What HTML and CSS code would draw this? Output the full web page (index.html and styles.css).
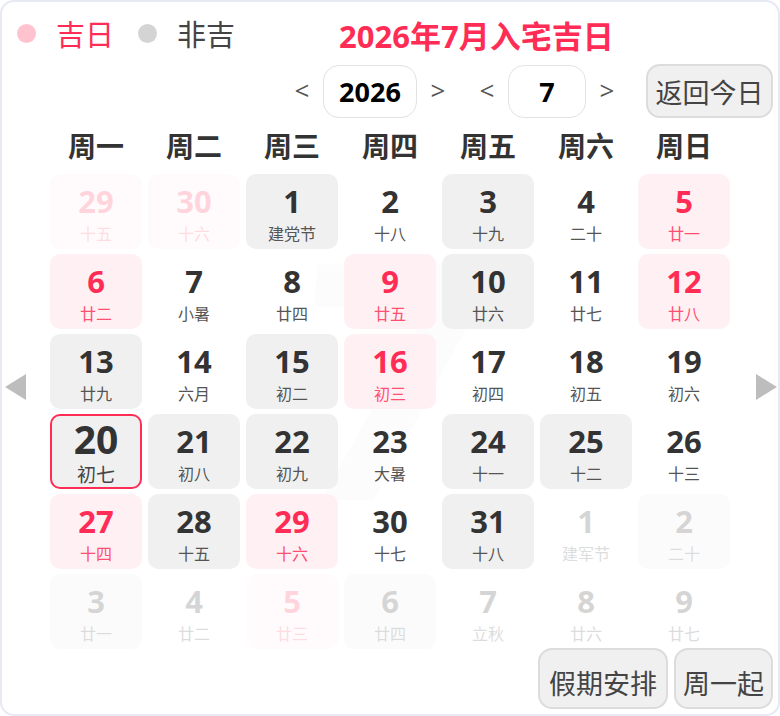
FILE: index.html
```html
<!DOCTYPE html>
<html lang="zh">
<head>
<meta charset="utf-8">
<link rel="stylesheet" href="styles.css">
</head>
<body>
<div class="card">
  <div class="watermark">7</div>
  <div class="top">
    <div class="legend">
      <span class="dot dot-good"></span><span class="legend-text good">吉日</span>
      <span class="dot dot-bad"></span><span class="legend-text">非吉</span>
    </div>
    <div class="title">2026年7月入宅吉日</div>
  </div>
  <div class="nav">
    <div class="group">
      <span class="arrow">&lt;</span>
      <span class="box box-year">2026</span>
      <span class="arrow">&gt;</span>
    </div>
    <div class="group">
      <span class="arrow">&lt;</span>
      <span class="box box-month">7</span>
      <span class="arrow">&gt;</span>
    </div>
    <button class="btn btn-today">返回今日</button>
  </div>
  <div class="main">
    <div class="side side-left"><span class="tri tri-left"></span></div>
    <div class="calendar">
      <div class="weekdays">
        <div>周一</div><div>周二</div><div>周三</div><div>周四</div><div>周五</div><div>周六</div><div>周日</div>
      </div>
      <div class="grid">
        <div class="cell pink faded"><span class="num">29</span><span class="lunar">十五</span></div>
        <div class="cell pink faded"><span class="num">30</span><span class="lunar">十六</span></div>
        <div class="cell gray"><span class="num">1</span><span class="lunar">建党节</span></div>
        <div class="cell"><span class="num">2</span><span class="lunar">十八</span></div>
        <div class="cell gray"><span class="num">3</span><span class="lunar">十九</span></div>
        <div class="cell"><span class="num">4</span><span class="lunar">二十</span></div>
        <div class="cell pink"><span class="num">5</span><span class="lunar">廿一</span></div>

        <div class="cell pink"><span class="num">6</span><span class="lunar">廿二</span></div>
        <div class="cell"><span class="num">7</span><span class="lunar">小暑</span></div>
        <div class="cell"><span class="num">8</span><span class="lunar">廿四</span></div>
        <div class="cell pink"><span class="num">9</span><span class="lunar">廿五</span></div>
        <div class="cell gray"><span class="num">10</span><span class="lunar">廿六</span></div>
        <div class="cell"><span class="num">11</span><span class="lunar">廿七</span></div>
        <div class="cell pink"><span class="num">12</span><span class="lunar">廿八</span></div>

        <div class="cell gray"><span class="num">13</span><span class="lunar">廿九</span></div>
        <div class="cell"><span class="num">14</span><span class="lunar">六月</span></div>
        <div class="cell gray"><span class="num">15</span><span class="lunar">初二</span></div>
        <div class="cell pink"><span class="num">16</span><span class="lunar">初三</span></div>
        <div class="cell"><span class="num">17</span><span class="lunar">初四</span></div>
        <div class="cell"><span class="num">18</span><span class="lunar">初五</span></div>
        <div class="cell"><span class="num">19</span><span class="lunar">初六</span></div>

        <div class="cell gray today"><span class="num">20</span><span class="lunar">初七</span></div>
        <div class="cell gray"><span class="num">21</span><span class="lunar">初八</span></div>
        <div class="cell gray"><span class="num">22</span><span class="lunar">初九</span></div>
        <div class="cell"><span class="num">23</span><span class="lunar">大暑</span></div>
        <div class="cell gray"><span class="num">24</span><span class="lunar">十一</span></div>
        <div class="cell gray"><span class="num">25</span><span class="lunar">十二</span></div>
        <div class="cell"><span class="num">26</span><span class="lunar">十三</span></div>

        <div class="cell pink"><span class="num">27</span><span class="lunar">十四</span></div>
        <div class="cell gray"><span class="num">28</span><span class="lunar">十五</span></div>
        <div class="cell pink"><span class="num">29</span><span class="lunar">十六</span></div>
        <div class="cell"><span class="num">30</span><span class="lunar">十七</span></div>
        <div class="cell gray"><span class="num">31</span><span class="lunar">十八</span></div>
        <div class="cell faded"><span class="num">1</span><span class="lunar">建军节</span></div>
        <div class="cell gray faded"><span class="num">2</span><span class="lunar">二十</span></div>

        <div class="cell gray faded"><span class="num">3</span><span class="lunar">廿一</span></div>
        <div class="cell faded"><span class="num">4</span><span class="lunar">廿二</span></div>
        <div class="cell pink faded"><span class="num">5</span><span class="lunar">廿三</span></div>
        <div class="cell gray faded"><span class="num">6</span><span class="lunar">廿四</span></div>
        <div class="cell faded"><span class="num">7</span><span class="lunar">立秋</span></div>
        <div class="cell faded"><span class="num">8</span><span class="lunar">廿六</span></div>
        <div class="cell faded"><span class="num">9</span><span class="lunar">廿七</span></div>
      </div>
    </div>
    <div class="side side-right"><span class="tri tri-right"></span></div>
  </div>
  <div class="footer">
    <button class="btn btn-foot btn-holiday">假期安排</button>
    <button class="btn btn-foot btn-week">周一起</button>
  </div>
</div>
</body>
</html>
```
FILE: styles.css
```css
* { box-sizing: border-box; }
html, body { margin: 0; padding: 0; background: #fff; }
body {
  font-family: "Open Sans", "Noto Sans CJK SC", sans-serif;
  color: #333;
}
.card {
  position: relative;
  width: 780px;
  height: 716px;
  border: 2px solid #e7e9f4;
  border-radius: 14px;
  overflow: hidden;
  background: #fff;
}
.watermark {
  position: absolute;
  left: 296px;
  top: 205px;
  font-size: 330px;
  line-height: 1;
  font-weight: 700;
  color: #fcfcfc;
  z-index: 0;
  transform: skewX(-6deg);
}
.top, .nav, .main, .footer { position: relative; z-index: 1; }

.top {
  display: flex;
  align-items: center;
  height: 62px;
  padding-left: 15px;
}
.legend {
  display: flex;
  align-items: center;
}
.dot {
  width: 19px;
  height: 19px;
  border-radius: 50%;
  display: inline-block;
}
.dot-good { background: #ffc3cf; }
.dot-bad { background: #d4d4d4; margin-left: 24px; }
.legend-text {
  font-family: "Noto Sans CJK SC", sans-serif;
  font-size: 29px;
  color: #444;
  margin-left: 20px;
  line-height: 1;
}
.legend-text.good { color: #ff2d55; }
.title {
  margin-left: 104px;
  font-size: 31px;
  font-weight: 700;
  color: #ff2d55;
  margin-top: 2px;
  font-family: "Open Sans", "Noto Sans CJK SC", sans-serif;
}

.nav {
  display: flex;
  justify-content: flex-end;
  align-items: center;
  height: 54px;
  padding-right: 5px;
}
.group {
  display: flex;
  align-items: center;
  gap: 13px;
  margin-right: 33px;
}
.group + .btn { margin-left: -2px; }
.arrow {
  width: 16px;
  text-align: center;
  font-size: 26px;
  color: #555;
  line-height: 1;
  margin-top: -2px;
}
.box {
  height: 53px;
  border: 1.5px solid #e2e2e2;
  border-radius: 16px;
  display: flex;
  align-items: center;
  justify-content: center;
  font-size: 27px;
  font-weight: 700;
  color: #000;
}
.box-year { width: 94px; }
.box-month { width: 78px; }
.btn {
  font-family: "Noto Sans CJK SC", sans-serif;
  font-size: 27px;
  color: #444;
  background: #f0f0f0;
  border: 2px solid #dcdcdc;
  border-radius: 14px;
  padding: 0;
  line-height: 1;
}
.btn-today {
  width: 127px;
  height: 54px;
}

.main {
  display: flex;
  margin-top: 8px;
}
.side {
  width: 48px;
  display: flex;
  align-items: center;
}
.side-left { padding-left: 3px; }
.side-right { justify-content: flex-end; padding-right: 1px; }
.tri {
  width: 0;
  height: 0;
  border-top: 13px solid transparent;
  border-bottom: 13px solid transparent;
  margin-top: -2px;
}
.tri-left { border-right: 21px solid #bdbdbd; }
.tri-right { border-left: 21px solid #bdbdbd; }

.calendar { width: 680px; }
.weekdays {
  display: grid;
  grid-template-columns: repeat(7, 92px);
  column-gap: 6px;
  height: 44px;
  align-items: center;
  margin-bottom: 4px;
  padding-bottom: 6px;
}
.weekdays div {
  text-align: center;
  font-family: "Noto Sans CJK SC", sans-serif;
  font-weight: 700;
  font-size: 28px;
  color: #333;
  line-height: 1;
}
.grid {
  display: grid;
  grid-template-columns: repeat(7, 92px);
  grid-auto-rows: 75px;
  gap: 5px 6px;
}
.cell {
  border-radius: 10px;
  display: flex;
  flex-direction: column;
  align-items: center;
  padding-top: 9px;
}
.cell.gray { background: #f0f0f0; }
.cell.pink { background: #fff0f3; }
.num {
  font-size: 31px;
  font-weight: 700;
  line-height: 36px;
  color: #333;
}
.lunar {
  font-family: "Noto Sans CJK SC", sans-serif;
  font-size: 16px;
  line-height: 20px;
  margin-top: 4px;
  color: #555;
}
.cell.pink .num { color: #ff2d55; }
.cell.pink .lunar { color: #ff4f72; }
.cell.faded { opacity: 0.2; }
.cell.today {
  border: 2px solid #ff2d55;
  padding-top: 4px;
}
.cell.today .num {
  font-size: 39px;
  line-height: 38px;
}
.cell.today .lunar {
  font-size: 19px;
  line-height: 22px;
  margin-top: 5px;
  color: #444;
}

.footer {
  display: flex;
  justify-content: flex-end;
  gap: 6px;
  padding-right: 5px;
  margin-top: -1px;
}
.btn-foot {
  height: 61px;
  padding-top: 8px;
}
.btn-holiday { width: 130px; }
.btn-week { width: 99px; }
```
